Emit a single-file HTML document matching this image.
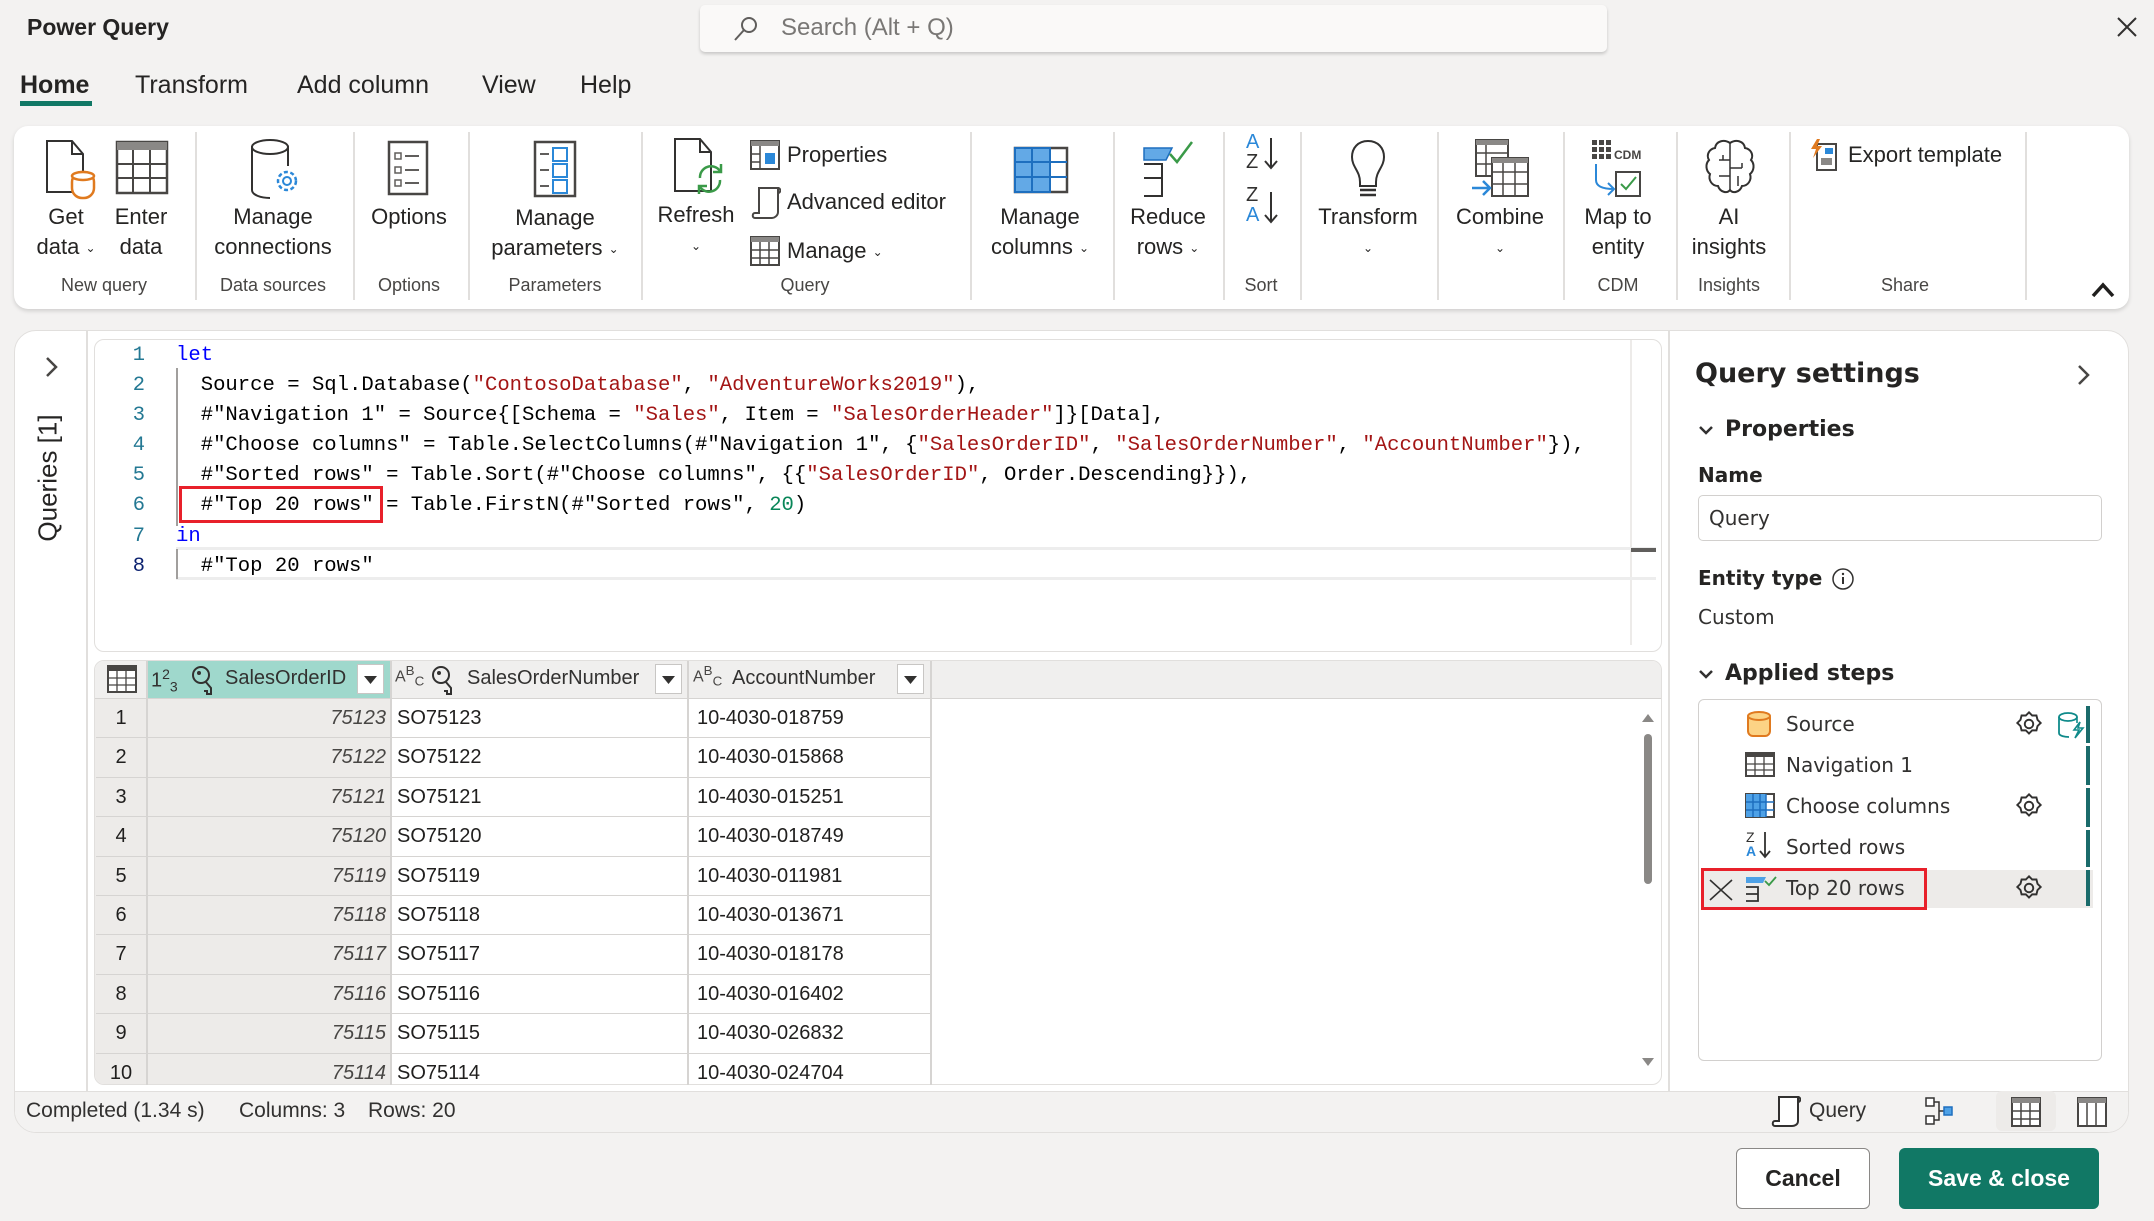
<!DOCTYPE html>
<html><head><meta charset="utf-8">
<style>
*{box-sizing:border-box;margin:0;padding:0}
body{width:2154px;height:1221px;background:#f3f2f1;font-family:"Liberation Sans",sans-serif;color:#201f1e;position:relative;overflow:hidden}
.a{position:absolute;white-space:nowrap}
.c{position:absolute;white-space:nowrap;transform:translateX(-50%);text-align:center}
.rb{font-size:22px;line-height:30px;color:#252423}
.gl{font-size:18px;color:#484644;top:275px}
.sep{position:absolute;top:132px;width:2px;height:168px;background:#e1dfdd}
.code{font-family:"Liberation Mono",monospace;font-size:20.6px;line-height:30.1px;white-space:pre;color:#000}
.ln{color:#237893;font-family:"Liberation Mono",monospace;font-size:20.4px;text-align:right;width:30px}
.k{color:#0000ff}.s{color:#a31515}.n{color:#098658}
.row{position:absolute;left:96px;width:834px;height:39.4px;border-bottom:1.5px solid #d6d4d2;font-size:20px}
.row div{position:absolute;top:0;height:100%;line-height:38px}
.row .v{left:52px;width:238px;text-align:right;font-style:italic;color:#484644}
.rp{font-family:"DejaVu Sans",sans-serif}
.ch{font-size:12px;vertical-align:2px}
</style></head><body>

<div class="a" style="left:27px;top:14px;font-size:23px;font-weight:bold;color:#252423">Power Query</div>
<div class="a" style="left:700px;top:5px;width:907px;height:47px;background:#faf9f8;border-radius:5px;box-shadow:0 2px 3px rgba(0,0,0,.18)"></div>
<svg class="a" style="left:730px;top:14px" width="30" height="30" viewBox="0 0 30 30"><circle cx="19" cy="11" r="7" fill="none" stroke="#605e5c" stroke-width="2"/><line x1="14" y1="16" x2="5" y2="26" stroke="#605e5c" stroke-width="2"/></svg>
<div class="a" style="left:781px;top:14px;font-size:24px;color:#797775">Search (Alt + Q)</div>
<svg class="a" style="left:2115px;top:15px" width="24" height="24"><path d="M3 3L21 21M21 3L3 21" stroke="#323130" stroke-width="2"/></svg>

<div class="a" style="left:20px;top:71px;font-size:25px;font-weight:bold;color:#252423">Home</div>
<div class="a" style="left:20px;top:101px;width:72px;height:5px;background:#117865"></div>
<div class="a" style="left:135px;top:71px;font-size:25px;color:#252423">Transform</div>
<div class="a" style="left:297px;top:71px;font-size:25px;color:#252423">Add column</div>
<div class="a" style="left:482px;top:71px;font-size:25px;color:#252423">View</div>
<div class="a" style="left:580px;top:71px;font-size:25px;color:#252423">Help</div>

<div class="a" style="left:14px;top:126px;width:2115px;height:183px;background:#fff;border-radius:14px;box-shadow:0 2px 4px rgba(0,0,0,.15)"></div>
<div class="sep" style="left:195px"></div><div class="sep" style="left:353px"></div><div class="sep" style="left:468px"></div><div class="sep" style="left:641px"></div><div class="sep" style="left:970px"></div><div class="sep" style="left:1113px"></div><div class="sep" style="left:1223px"></div><div class="sep" style="left:1300px"></div><div class="sep" style="left:1437px"></div><div class="sep" style="left:1563px"></div><div class="sep" style="left:1676px"></div><div class="sep" style="left:1789px"></div><div class="sep" style="left:2025px"></div>

<svg class="a" style="left:44px;top:138px" width="54" height="64"><path d="M3 3h25l11 13v38H3z" fill="#fff" stroke="#323130" stroke-width="2"/><path d="M28 3v13h11" fill="none" stroke="#323130" stroke-width="2"/><rect x="28" y="34" width="22" height="26" rx="10" fill="#fff" stroke="#e07a1f" stroke-width="2.5"/><ellipse cx="39" cy="38" rx="11" ry="4" fill="#fff" stroke="#e07a1f" stroke-width="2.5"/></svg>
<svg class="a" style="left:115px;top:140px" width="54" height="56"><rect x="2" y="2" width="50" height="51" fill="#fff" stroke="#484644" stroke-width="2.5"/><rect x="2" y="2" width="50" height="8" fill="#8a8886"/><path d="M2 24h50M2 38h50M18 10v43M35 10v43" stroke="#484644" stroke-width="2"/></svg>
<svg class="a" style="left:248px;top:138px" width="56" height="66"><path d="M4 8v44c0 5 9 8 18 8" fill="none" stroke="#323130" stroke-width="2"/><path d="M40 8v20" stroke="#323130" stroke-width="2"/><ellipse cx="22" cy="9" rx="18" ry="7" fill="#fff" stroke="#323130" stroke-width="2"/><circle cx="39" cy="43" r="9" fill="none" stroke="#2b88d8" stroke-width="2.5" stroke-dasharray="4 2.5"/><circle cx="39" cy="43" r="4" fill="none" stroke="#2b88d8" stroke-width="2"/></svg>
<svg class="a" style="left:387px;top:140px" width="42" height="56"><rect x="2" y="2" width="38" height="52" fill="#fff" stroke="#484644" stroke-width="2.5"/><path d="M8 13h6v6H8zM8 27h6v6H8zM8 40h6v6H8z" fill="none" stroke="#605e5c" stroke-width="1.5"/><path d="M18 16h14M18 30h14M18 43h14" stroke="#605e5c" stroke-width="2"/></svg>
<svg class="a" style="left:533px;top:140px" width="44" height="58"><rect x="2" y="2" width="40" height="54" fill="#fff" stroke="#484644" stroke-width="2.5"/><path d="M7 14h9M7 30h9M7 46h9" stroke="#605e5c" stroke-width="2"/><rect x="20" y="8" width="14" height="13" fill="#fff" stroke="#2b88d8" stroke-width="2"/><rect x="20" y="24" width="14" height="13" fill="#fff" stroke="#2b88d8" stroke-width="2"/><rect x="20" y="40" width="14" height="13" fill="#fff" stroke="#2b88d8" stroke-width="2"/></svg>
<svg class="a" style="left:672px;top:136px" width="56" height="64"><path d="M3 3h25l11 13v39H3z" fill="#fff" stroke="#323130" stroke-width="2"/><path d="M28 3v13h11" fill="none" stroke="#323130" stroke-width="2"/><path d="M28 42a11 11 0 0 1 20-7M48 44a11 11 0 0 1-20 7" fill="none" stroke="#3a9a48" stroke-width="2.5"/><path d="M49 28v8h-8M27 58v-8h8" fill="none" stroke="#3a9a48" stroke-width="2.5"/></svg>
<svg class="a" style="left:750px;top:140px" width="30" height="30"><rect x="1" y="1" width="28" height="28" fill="#fff" stroke="#484644" stroke-width="2"/><rect x="1" y="1" width="28" height="5" fill="#8a8886"/><path d="M10 6v23M1 14h9M1 22h9" stroke="#484644" stroke-width="1.5"/><rect x="15" y="13" width="10" height="11" fill="#2b88d8"/></svg>
<svg class="a" style="left:751px;top:186px" width="30" height="34"><path d="M8 2h19v24c0 4-4 6-6 6H4c-3 0-3-5 0-5h4z" fill="#fff" stroke="#484644" stroke-width="2"/><path d="M27 2c3 0 3 5 0 5" fill="none" stroke="#484644" stroke-width="2"/></svg>
<svg class="a" style="left:750px;top:236px" width="30" height="30"><rect x="1" y="1" width="28" height="28" fill="#fff" stroke="#484644" stroke-width="2"/><rect x="1" y="1" width="28" height="5" fill="#8a8886"/><path d="M1 14h28M1 22h28M10 6v23M19 6v23" stroke="#484644" stroke-width="1.5"/></svg>
<svg class="a" style="left:1013px;top:146px" width="56" height="48"><rect x="2" y="2" width="52" height="44" fill="#fff" stroke="#484644" stroke-width="2.5"/><rect x="2" y="2" width="35" height="44" fill="#63a9e6" stroke="#1e6fbf" stroke-width="2"/><path d="M2 16h52M2 31h52M19 2v44M37 2v44" stroke="#1e6fbf" stroke-width="2"/></svg>
<svg class="a" style="left:1142px;top:140px" width="54" height="58"><path d="M2 8h28l-6 12H2z" fill="#63a9e6" stroke="#1e6fbf" stroke-width="1.5"/><path d="M28 14l7 8 15-20" fill="none" stroke="#3a9a48" stroke-width="2.5"/><path d="M2 24h18v32H2M2 38h18" fill="none" stroke="#323130" stroke-width="2"/></svg>
<div class="a" style="left:1246px;top:132px;font-size:20px;line-height:20px;color:#2b88d8">A<br><span style="color:#323130">Z</span></div>
<div class="a" style="left:1246px;top:185px;font-size:20px;line-height:20px;color:#323130">Z<br><span style="color:#2b88d8">A</span></div>
<svg class="a" style="left:1263px;top:136px" width="16" height="96"><path d="M8 2v30M2 25l6 7 6-7M8 56v30M2 79l6 7 6-7" fill="none" stroke="#323130" stroke-width="2"/></svg>
<svg class="a" style="left:1348px;top:138px" width="40" height="62"><path d="M20 3c-10 0-16 7-16 16 0 10 8 14 8 25v4h16v-4c0-11 8-15 8-25 0-9-6-16-16-16z" fill="#fff" stroke="#323130" stroke-width="2"/><path d="M12 52h16M12 57h16" stroke="#323130" stroke-width="2.5"/></svg>
<svg class="a" style="left:1472px;top:138px" width="60" height="64"><rect x="4" y="2" width="32" height="36" fill="#fff" stroke="#484644" stroke-width="2"/><rect x="4" y="2" width="32" height="5" fill="#8a8886"/><path d="M4 15h32M4 26h32M14 7v31" stroke="#484644" stroke-width="1.5"/><rect x="20" y="20" width="36" height="38" fill="#fff" stroke="#484644" stroke-width="2"/><rect x="20" y="20" width="36" height="5" fill="#8a8886"/><path d="M20 34h36M20 46h36M31 25v33M43 25v33" stroke="#484644" stroke-width="1.5"/><path d="M0 50h17M11 43l7 7-7 7" fill="none" stroke="#2b88d8" stroke-width="2.5"/></svg>
<svg class="a" style="left:1590px;top:138px" width="60" height="60"><g fill="#484644"><rect x="2" y="2" width="5" height="5"/><rect x="9" y="2" width="5" height="5"/><rect x="16" y="2" width="5" height="5"/><rect x="2" y="9" width="5" height="5"/><rect x="9" y="9" width="5" height="5"/><rect x="16" y="9" width="5" height="5"/><rect x="2" y="16" width="5" height="5"/><rect x="9" y="16" width="5" height="5"/><rect x="16" y="16" width="5" height="5"/></g><text x="24" y="21" font-size="12" font-family="Liberation Sans" font-weight="bold" fill="#484644">CDM</text><rect x="26" y="34" width="24" height="24" fill="#fff" stroke="#484644" stroke-width="2"/><path d="M31 46l5 5 10-12" fill="none" stroke="#3a9a48" stroke-width="2"/><path d="M6 26v16c0 6 6 9 18 9M18 45l6 6-6 6" fill="none" stroke="#2b88d8" stroke-width="2"/></svg>
<svg class="a" style="left:1705px;top:138px" width="50" height="60"><path d="M25 5c-6-4-14-2-15 5-6 1-9 7-6 12-4 4-3 11 1 14-2 6 2 12 8 12 2 6 9 8 12 4 3 4 10 2 12-4 6 0 10-6 8-12 4-3 5-10 1-14 3-5 0-11-6-12-1-7-9-9-15-5z" fill="#fff" stroke="#323130" stroke-width="2"/><path d="M25 5v47M14 22h11M18 17v5M25 30h12M37 25v5M14 38h11M33 38v10" stroke="#323130" stroke-width="1.5"/></svg>
<svg class="a" style="left:1808px;top:138px" width="30" height="34"><path d="M9 6h19v26H9z" fill="#fff" stroke="#484644" stroke-width="2"/><rect x="17" y="10" width="8" height="6" fill="#2b88d8"/><rect x="13" y="20" width="11" height="7" fill="#8a8886"/><path d="M9 1l-6 10h5l-3 9 9-12H9l3-7z" fill="#e07a1f"/></svg>

<div class="c rb" style="left:66px;top:202px">Get<br>data <span class="ch">&#8964;</span></div>
<div class="c rb" style="left:141px;top:202px">Enter<br>data</div>
<div class="c rb" style="left:273px;top:202px">Manage<br>connections</div>
<div class="c rb" style="left:409px;top:202px">Options</div>
<div class="c rb" style="left:555px;top:203px">Manage<br>parameters <span class="ch">&#8964;</span></div>
<div class="c rb" style="left:696px;top:200px">Refresh<br><span class="ch">&#8964;</span></div>
<div class="a rb" style="left:787px;top:140px">Properties</div>
<div class="a rb" style="left:787px;top:187px">Advanced editor</div>
<div class="a rb" style="left:787px;top:236px">Manage <span class="ch">&#8964;</span></div>
<div class="c rb" style="left:1040px;top:202px">Manage<br>columns <span class="ch">&#8964;</span></div>
<div class="c rb" style="left:1168px;top:202px">Reduce<br>rows <span class="ch">&#8964;</span></div>
<div class="c rb" style="left:1368px;top:202px">Transform<br><span class="ch">&#8964;</span></div>
<div class="c rb" style="left:1500px;top:202px">Combine<br><span class="ch">&#8964;</span></div>
<div class="c rb" style="left:1618px;top:202px">Map to<br>entity</div>
<div class="c rb" style="left:1729px;top:202px">AI<br>insights</div>
<div class="a rb" style="left:1848px;top:140px">Export template</div>
<div class="c gl" style="left:104px">New query</div>
<div class="c gl" style="left:273px">Data sources</div>
<div class="c gl" style="left:409px">Options</div>
<div class="c gl" style="left:555px">Parameters</div>
<div class="c gl" style="left:805px">Query</div>
<div class="c gl" style="left:1261px">Sort</div>
<div class="c gl" style="left:1618px">CDM</div>
<div class="c gl" style="left:1729px">Insights</div>
<div class="c gl" style="left:1905px">Share</div>
<svg class="a" style="left:2090px;top:281px" width="26" height="18"><path d="M3 15L13 4l10 11" fill="none" stroke="#201f1e" stroke-width="3.5"/></svg>

<div class="a" style="left:14px;top:330px;width:2115px;height:803px;background:#fff;border:1.5px solid #e1dfdd;border-radius:22px;overflow:hidden">
  <div class="a" style="left:0;top:760px;width:2115px;height:45px;background:#f3f2f1;border-top:1.5px solid #e1dfdd"></div>
</div>
<div class="a" style="left:86px;top:331px;width:1.5px;height:760px;background:#e1dfdd"></div>
<svg class="a" style="left:44px;top:356px" width="16" height="22"><path d="M3 2l9 9-9 9" fill="none" stroke="#484644" stroke-width="2.5"/></svg>
<div class="a" style="left:48px;top:478px;font-size:26px;color:#252423;transform:translate(-50%,-50%) rotate(-90deg)">Queries [1]</div>

<div class="a" style="left:94px;top:339px;width:1568px;height:313px;border:1.5px solid #e1dfdd;border-radius:10px;background:#fff"></div>
<div class="a" style="left:1630px;top:340px;width:1.5px;height:305px;background:#edebe9"></div>
<div class="a" style="left:176px;top:547px;width:1480px;height:33px;border-top:3px solid #ededed;border-bottom:3px solid #ededed"></div>
<div class="a" style="left:1631px;top:548px;width:25px;height:4px;background:#605e5c"></div>
<div class="a" style="left:176px;top:368px;width:2px;height:158px;background:#a19f9d"></div>
<div class="a" style="left:176px;top:549px;width:2px;height:30px;background:#a19f9d"></div>
<div class="a" style="left:115px;top:341px">
<div class="ln" style="position:absolute;top:0;line-height:30.1px">1<br>2<br>3<br>4<br>5<br>6<br>7<br><span style="color:#0b216f">8</span></div>
</div>
<div class="a code" style="left:176px;top:341px"><span class="k">let</span>
  Source = Sql.Database(<span class="s">"ContosoDatabase"</span>, <span class="s">"AdventureWorks2019"</span>),
  #"Navigation 1" = Source{[Schema = <span class="s">"Sales"</span>, Item = <span class="s">"SalesOrderHeader"</span>]}[Data],
  #"Choose columns" = Table.SelectColumns(#"Navigation 1", {<span class="s">"SalesOrderID"</span>, <span class="s">"SalesOrderNumber"</span>, <span class="s">"AccountNumber"</span>}),
  #"Sorted rows" = Table.Sort(#"Choose columns", {{<span class="s">"SalesOrderID"</span>, Order.Descending}}),
  #"Top 20 rows" = Table.FirstN(#"Sorted rows", <span class="n">20</span>)
<span class="k">in</span>
  #"Top 20 rows"</div>
<div class="a" style="left:179px;top:486px;width:204px;height:37px;border:3.5px solid #e8202a"></div>

<div class="a" style="left:94px;top:660px;width:1568px;height:425px;border:1.5px solid #e1dfdd;border-radius:10px;background:#fff;overflow:hidden">
  <div class="a" style="left:0;top:0;width:1568px;height:38px;background:#f0efee;border-bottom:1.5px solid #d6d4d2"></div>
  <div class="a" style="left:0;top:38px;width:52px;height:400px;background:#edebe9"></div>
  <div class="a" style="left:52px;top:38px;width:244px;height:400px;background:#edebe9"></div>
</div>
<div class="a" style="left:146px;top:661px;width:244px;height:37px;background:#9fd8cc"></div>
<svg class="a" style="left:107px;top:665px" width="30" height="28"><rect x="1" y="1" width="28" height="26" fill="#fff" stroke="#484644" stroke-width="2"/><rect x="1" y="1" width="28" height="5" fill="#484644"/><path d="M1 13h28M1 20h28M10 6v21M19 6v21" stroke="#484644" stroke-width="1.3"/></svg>
<div class="a" style="left:151px;top:666px;font-size:20px;color:#323130">1<sup style="font-size:14px">2</sup><sub style="font-size:14px">3</sub></div>
<svg class="a" style="left:190px;top:664px" width="28" height="32"><circle cx="11" cy="11" r="8" fill="none" stroke="#323130" stroke-width="2"/><path d="M15 17l6 7v6h-4v-3h-3" fill="none" stroke="#323130" stroke-width="2"/><circle cx="9" cy="9" r="2" fill="#323130"/></svg>
<div class="a" style="left:225px;top:667px;font-size:20px;color:#323130">SalesOrderID</div>
<div class="a" style="left:357px;top:664px;width:27px;height:30px;background:#fff;border:1px solid #c8c6c4"><svg width="25" height="28"><path d="M6 11h13l-6.5 8z" fill="#323130"/></svg></div>
<div class="a" style="left:395px;top:664px;font-size:16px;color:#484644;line-height:14px">A<sup>B</sup><sub>C</sub></div>
<svg class="a" style="left:430px;top:664px" width="28" height="32"><circle cx="11" cy="11" r="8" fill="none" stroke="#323130" stroke-width="2"/><path d="M15 17l6 7v6h-4v-3h-3" fill="none" stroke="#323130" stroke-width="2"/><circle cx="9" cy="9" r="2" fill="#323130"/></svg>
<div class="a" style="left:467px;top:667px;font-size:20px;color:#323130">SalesOrderNumber</div>
<div class="a" style="left:655px;top:664px;width:27px;height:30px;background:#fff;border:1px solid #c8c6c4"><svg width="25" height="28"><path d="M6 11h13l-6.5 8z" fill="#323130"/></svg></div>
<div class="a" style="left:693px;top:664px;font-size:16px;color:#484644;line-height:14px">A<sup>B</sup><sub>C</sub></div>
<div class="a" style="left:732px;top:667px;font-size:20px;color:#323130">AccountNumber</div>
<div class="a" style="left:897px;top:664px;width:27px;height:30px;background:#fff;border:1px solid #c8c6c4"><svg width="25" height="28"><path d="M6 11h13l-6.5 8z" fill="#323130"/></svg></div>
<div class="a" style="left:146px;top:661px;width:1.5px;height:424px;background:#d6d4d2"></div>
<div class="a" style="left:390px;top:661px;width:1.5px;height:424px;background:#d6d4d2"></div>
<div class="a" style="left:687px;top:661px;width:1.5px;height:424px;background:#d6d4d2"></div>
<div class="a" style="left:930px;top:661px;width:1.5px;height:424px;background:#d6d4d2"></div>

<div class="row" style="top:699px"><div style="left:0;width:50px;text-align:center">1</div><div class="v">75123</div><div style="left:301px">SO75123</div><div style="left:601px">10-4030-018759</div></div>
<div class="row" style="top:738.4px"><div style="left:0;width:50px;text-align:center">2</div><div class="v">75122</div><div style="left:301px">SO75122</div><div style="left:601px">10-4030-015868</div></div>
<div class="row" style="top:777.8px"><div style="left:0;width:50px;text-align:center">3</div><div class="v">75121</div><div style="left:301px">SO75121</div><div style="left:601px">10-4030-015251</div></div>
<div class="row" style="top:817.2px"><div style="left:0;width:50px;text-align:center">4</div><div class="v">75120</div><div style="left:301px">SO75120</div><div style="left:601px">10-4030-018749</div></div>
<div class="row" style="top:856.6px"><div style="left:0;width:50px;text-align:center">5</div><div class="v">75119</div><div style="left:301px">SO75119</div><div style="left:601px">10-4030-011981</div></div>
<div class="row" style="top:896px"><div style="left:0;width:50px;text-align:center">6</div><div class="v">75118</div><div style="left:301px">SO75118</div><div style="left:601px">10-4030-013671</div></div>
<div class="row" style="top:935.4px"><div style="left:0;width:50px;text-align:center">7</div><div class="v">75117</div><div style="left:301px">SO75117</div><div style="left:601px">10-4030-018178</div></div>
<div class="row" style="top:974.8px"><div style="left:0;width:50px;text-align:center">8</div><div class="v">75116</div><div style="left:301px">SO75116</div><div style="left:601px">10-4030-016402</div></div>
<div class="row" style="top:1014.2px"><div style="left:0;width:50px;text-align:center">9</div><div class="v">75115</div><div style="left:301px">SO75115</div><div style="left:601px">10-4030-026832</div></div>
<div class="row" style="top:1053.6px;height:31px;border:none;overflow:hidden"><div style="left:0;width:50px;text-align:center">10</div><div class="v">75114</div><div style="left:301px">SO75114</div><div style="left:601px">10-4030-024704</div></div>
<svg class="a" style="left:1640px;top:710px" width="16" height="360"><path d="M2 12h12L8 4z" fill="#8a8886"/><rect x="4" y="24" width="8" height="150" rx="4" fill="#8a8886"/><path d="M2 348h12l-6 8z" fill="#8a8886"/></svg>

<div class="a" style="left:26px;top:1099px;font-size:21px;color:#323130">Completed (1.34 s)</div>
<div class="a" style="left:239px;top:1099px;font-size:21px;color:#323130">Columns: 3</div>
<div class="a" style="left:368px;top:1099px;font-size:21px;color:#323130">Rows: 20</div>
<svg class="a" style="left:1771px;top:1095px" width="30" height="32"><path d="M8 2h19v24c0 4-4 5-6 5H4c-3 0-3-5 0-5h4z" fill="#fff" stroke="#323130" stroke-width="2"/><path d="M27 2c3 0 3 5 0 5" fill="none" stroke="#323130" stroke-width="2"/></svg>
<div class="a" style="left:1809px;top:1099px;font-size:21px;color:#323130">Query</div>
<svg class="a" style="left:1924px;top:1096px" width="30" height="30"><rect x="2" y="2" width="8" height="8" fill="#fff" stroke="#323130" stroke-width="1.5"/><rect x="2" y="20" width="8" height="8" fill="#fff" stroke="#323130" stroke-width="1.5"/><path d="M10 6h5v18h-5M15 15h5" fill="none" stroke="#323130" stroke-width="1.5"/><rect x="20" y="11" width="8" height="8" fill="#4ea1e6" stroke="#1e6fbf" stroke-width="1.5"/></svg>
<div class="a" style="left:1996px;top:1091px;width:60px;height:40px;background:#edebe9;border-radius:6px"></div>
<svg class="a" style="left:2011px;top:1097px" width="30" height="30"><rect x="1" y="1" width="28" height="28" fill="#fff" stroke="#484644" stroke-width="2"/><rect x="1" y="1" width="28" height="5" fill="#8a8886"/><path d="M1 14h28M1 22h28M10 6v23M19 6v23" stroke="#484644" stroke-width="1.5"/></svg>
<svg class="a" style="left:2077px;top:1097px" width="30" height="30"><rect x="1" y="1" width="28" height="28" fill="#fff" stroke="#484644" stroke-width="2"/><rect x="1" y="1" width="28" height="5" fill="#8a8886"/><path d="M10 6v23M19 6v23" stroke="#484644" stroke-width="1.5"/></svg>

<div class="a" style="left:1668px;top:331px;width:1.5px;height:760px;background:#e1dfdd"></div>
<div class="a rp" style="left:1695px;top:358px;font-size:27px;font-weight:600;color:#252423">Query settings</div>
<svg class="a" style="left:2076px;top:363px" width="16" height="24"><path d="M3 3l9 9-9 9" fill="none" stroke="#484644" stroke-width="2.5"/></svg>
<svg class="a" style="left:1698px;top:424px" width="16" height="12"><path d="M2 3l6 6 6-6" fill="none" stroke="#323130" stroke-width="2.5"/></svg>
<div class="a rp" style="left:1725px;top:417px;font-size:22px;font-weight:600;color:#252423">Properties</div>
<div class="a rp" style="left:1698px;top:463px;font-size:20px;font-weight:600;color:#252423">Name</div>
<div class="a" style="left:1698px;top:495px;width:404px;height:46px;border:1.5px solid #d2d0ce;border-radius:5px;background:#fff"></div>
<div class="a rp" style="left:1709px;top:506px;font-size:20px;color:#323130">Query</div>
<div class="a rp" style="left:1698px;top:566px;font-size:20px;font-weight:600;color:#252423">Entity type</div>
<svg class="a" style="left:1831px;top:567px" width="24" height="24"><circle cx="12" cy="12" r="10" fill="none" stroke="#323130" stroke-width="1.5"/><path d="M12 10v7" stroke="#323130" stroke-width="2"/><circle cx="12" cy="7" r="1.2" fill="#323130"/></svg>
<div class="a rp" style="left:1698px;top:605px;font-size:20px;color:#323130">Custom</div>
<svg class="a" style="left:1698px;top:668px" width="16" height="12"><path d="M2 3l6 6 6-6" fill="none" stroke="#323130" stroke-width="2.5"/></svg>
<div class="a rp" style="left:1725px;top:661px;font-size:22px;font-weight:600;color:#252423">Applied steps</div>
<div class="a" style="left:1698px;top:699px;width:404px;height:362px;border:1.5px solid #d2d0ce;border-radius:6px;background:#fff"></div>
<div class="a" style="left:1703px;top:870px;width:390px;height:38px;background:#edebe9"></div>
<div class="a" style="left:2086px;top:706px;width:4px;height:200px;background:#1a6b6b"></div>
<div class="a" style="left:2086px;top:743px;width:4px;height:3px;background:#fff"></div>
<div class="a" style="left:2086px;top:785px;width:4px;height:3px;background:#fff"></div>
<div class="a" style="left:2086px;top:827px;width:4px;height:3px;background:#fff"></div>
<div class="a" style="left:2086px;top:867px;width:4px;height:3px;background:#fff"></div>
<svg class="a" style="left:1745px;top:709px" width="28" height="30"><rect x="3" y="4" width="22" height="23" rx="5" fill="#fcd385" stroke="#e07a1f" stroke-width="2"/><ellipse cx="14" cy="7" rx="11" ry="4" fill="#fcd385" stroke="#e07a1f" stroke-width="2"/></svg>
<svg class="a" style="left:1745px;top:752px" width="30" height="26"><rect x="1" y="1" width="28" height="23" fill="#fff" stroke="#484644" stroke-width="2"/><rect x="1" y="1" width="28" height="4" fill="#484644"/><path d="M1 12h28M1 18h28M10 5v19M19 5v19" stroke="#484644" stroke-width="1.3"/></svg>
<svg class="a" style="left:1745px;top:793px" width="30" height="26"><rect x="1" y="1" width="28" height="23" fill="#fff" stroke="#484644" stroke-width="2"/><rect x="1" y="1" width="20" height="23" fill="#4ea1e6"/><path d="M1 9h28M1 17h28M8 1v23M15 1v23M21 1v23" stroke="#1e6fbf" stroke-width="1.5"/></svg>
<div class="a" style="left:1746px;top:830px;font-size:14px;line-height:14px;color:#323130">Z<br><span style="color:#2b88d8;font-weight:bold">A</span></div>
<svg class="a" style="left:1758px;top:830px" width="14" height="30"><path d="M7 2v25M2 21l5 6 5-6" fill="none" stroke="#323130" stroke-width="1.8"/></svg>
<svg class="a" style="left:1744px;top:873px" width="34" height="30"><path d="M2 4h20l-3 6H2z" fill="#4ea1e6"/><path d="M21 8l4 4 7-8" fill="none" stroke="#3a9a48" stroke-width="1.8"/><path d="M2 14h12v14H2M2 21h12" fill="none" stroke="#323130" stroke-width="1.8"/></svg>
<div class="a rp" style="left:1786px;top:712px;font-size:20px;color:#323130">Source</div>
<div class="a rp" style="left:1786px;top:753px;font-size:20px;color:#323130">Navigation 1</div>
<div class="a rp" style="left:1786px;top:794px;font-size:20px;color:#323130">Choose columns</div>
<div class="a rp" style="left:1786px;top:835px;font-size:20px;color:#323130">Sorted rows</div>
<div class="a rp" style="left:1786px;top:876px;font-size:20px;color:#323130">Top 20 rows</div>
<svg class="a" style="left:2012px;top:707px" width="34" height="34" viewBox="0 0 32 30"><path d="M16 4l3 3h4l1 4 3 3-3 3-1 4h-4l-3 3-3-3H9l-1-4-3-3 3-3 1-4h4z" fill="none" stroke="#323130" stroke-width="1.8"/><circle cx="16" cy="15" r="4" fill="none" stroke="#323130" stroke-width="1.8"/></svg>
<svg class="a" style="left:2012px;top:789px" width="34" height="34" viewBox="0 0 32 30"><path d="M16 4l3 3h4l1 4 3 3-3 3-1 4h-4l-3 3-3-3H9l-1-4-3-3 3-3 1-4h4z" fill="none" stroke="#323130" stroke-width="1.8"/><circle cx="16" cy="15" r="4" fill="none" stroke="#323130" stroke-width="1.8"/></svg>
<svg class="a" style="left:2012px;top:871px" width="34" height="34" viewBox="0 0 32 30"><path d="M16 4l3 3h4l1 4 3 3-3 3-1 4h-4l-3 3-3-3H9l-1-4-3-3 3-3 1-4h4z" fill="none" stroke="#323130" stroke-width="1.8"/><circle cx="16" cy="15" r="4" fill="none" stroke="#323130" stroke-width="1.8"/></svg>
<svg class="a" style="left:2056px;top:710px" width="30" height="30"><path d="M3 7v16c0 3 6 4 10 4" fill="none" stroke="#0f8a8a" stroke-width="1.8"/><ellipse cx="12" cy="7" rx="9" ry="4" fill="none" stroke="#0f8a8a" stroke-width="1.8"/><path d="M21 7v6M24 12l-6 8h5l-4 8 8-10h-5z" fill="none" stroke="#0f8a8a" stroke-width="1.6"/></svg>
<svg class="a" style="left:1708px;top:878px" width="26" height="24"><path d="M2 2l22 20M24 2L2 22" stroke="#323130" stroke-width="1.6"/></svg>
<div class="a" style="left:1701px;top:868px;width:226px;height:42px;border:3.5px solid #e8202a"></div>

<div class="a" style="left:1736px;top:1148px;width:134px;height:61px;background:#fff;border:1.5px solid #8a8886;border-radius:6px;font-size:23px;font-weight:bold;color:#252423;text-align:center;line-height:58px">Cancel</div>
<div class="a" style="left:1899px;top:1148px;width:200px;height:61px;background:#117865;border-radius:6px;font-size:23px;font-weight:bold;color:#fff;text-align:center;line-height:61px">Save &amp; close</div>
</body></html>
